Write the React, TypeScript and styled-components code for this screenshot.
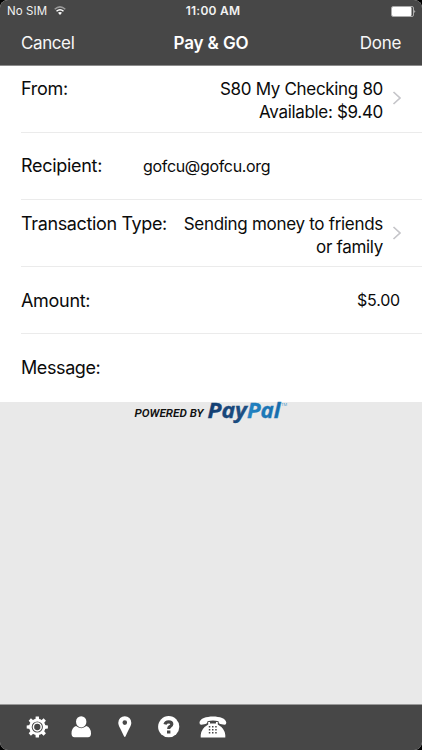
import React from 'react';
import styled, { createGlobalStyle } from 'styled-components';

const GlobalStyle = createGlobalStyle`
  * { box-sizing: border-box; }
  body { margin: 0; background: #000; font-family: Inter, "Liberation Sans", sans-serif; -webkit-font-smoothing: antialiased; }
`;

const Screen = styled.main`
  width: 422px;
  height: 750px;
  display: flex;
  flex-direction: column;
  overflow: hidden;
  border-radius: 8px;
  background: #e9e9e9;
  color: #0b0b0b;
`;

const Header = styled.header`
  height: 66px;
  flex: none;
  background: #474747;
  border-bottom: 1px solid #8c8c8c;
  color: #fff;
`;

const StatusBar = styled.div`
  height: 22px;
  display: grid;
  grid-template-columns: 1fr auto 1fr;
  align-items: center;
  padding: 0 6px 0 7px;
  color: #f2f2f2;
`;

const Carrier = styled.div`
  display: flex;
  align-items: center;
  gap: 7px;
  font-size: 11.5px;
  letter-spacing: 0.08px;
  line-height: 22px;
`;

const Clock = styled.div`
  font-size: 12px;
  font-weight: 600;
  letter-spacing: 0.25px;
  line-height: 22px;
  padding-left: 3px;
`;

const BatteryIcon = styled.svg`
  justify-self: end;
  display: block;
`;

const NavBar = styled.nav`
  height: 42px;
  display: grid;
  grid-template-columns: 1fr auto 1fr;
  align-items: center;
  padding: 0 21px;
`;

const NavButton = styled.button<{ $end?: boolean }>`
  justify-self: ${(p) => (p.$end ? 'end' : 'start')};
  padding: 0;
  border: 0;
  background: none;
  color: #f7f7f7;
  font: 400 17px/24px Inter, "Liberation Sans", sans-serif;
  letter-spacing: ${(p) => (p.$end ? '-0.3px' : '-0.4px')};
`;

const Title = styled.h1`
  margin: 0;
  font-size: 17px;
  font-weight: 600;
  line-height: 24px;
  letter-spacing: -0.1px;
`;

const Form = styled.section`
  height: 336px;
  flex: none;
  background: #fff;
`;

const Row = styled.div<{ $top: number }>`
  height: 67px;
  margin-left: 21px;
  padding: ${(p) => p.$top}px 21px 0 0;
  display: flex;
  align-items: flex-start;
  border-bottom: 1px solid #ebebeb;
  &:last-child { border-bottom: 0; }
`;

const Label = styled.div<{ $track?: number }>`
  flex: none;
  font-size: 18px;
  line-height: 22px;
  letter-spacing: ${(p) => p.$track ?? -0.3}px;
`;

const Value = styled.div<{ $track?: number }>`
  margin-left: auto;
  font-size: 17px;
  line-height: 22.5px;
  text-align: right;
  white-space: nowrap;
  letter-spacing: ${(p) => p.$track ?? -0.38}px;
`;

const Recipient = styled(Value)`
  margin-left: 41px;
  font-size: 16px;
  line-height: 22px;
`;

const Amount = styled(Value)`
  font-size: 16px;
  line-height: 21px;
  padding-right: 1px;
`;

const Chevron = styled.svg`
  flex: none;
  margin: 13px -1px 0 9px;
`;

const Body = styled.section`
  flex: 1;
  display: flex;
  justify-content: center;
  align-items: flex-start;
`;

const LogoSvg = styled.svg`
  overflow: visible;
`;

const TabBar = styled.footer`
  height: 46px;
  flex: none;
  display: flex;
  background: #474747;
  border-top: 1px solid #999;
  padding: 7px 0 0 22px;
  gap: 14px;
`;

const Tab = styled.button`
  width: 30px;
  height: 30px;
  padding: 0;
  border: 0;
  background: none;
  svg { display: block; }
`;

const Arrow = () => (
  <Chevron width="10" height="14" viewBox="0 0 10 14" fill="none" stroke="#c5c5c9" strokeWidth="1.7">
    <path d="M1.5 1 L8 7 L1.5 13" />
  </Chevron>
);

const teeth = [0, 45, 90, 135, 180, 225, 270, 315];

const Logo = () => (
  <LogoSvg width="160" height="26" viewBox="0 0 160 26" role="img">
    <defs>
      <linearGradient id="pay" x1="0" x2="1">
        <stop offset="0" stopColor="#123d70" />
        <stop offset="1" stopColor="#1f5287" />
      </linearGradient>
      <linearGradient id="pal" x1="0" x2="1">
        <stop offset="0" stopColor="#2386c6" />
        <stop offset="1" stopColor="#1669a8" />
      </linearGradient>
    </defs>
    <text x="3.5" y="14.5" fontFamily="Roboto, sans-serif" fontSize="11" fontStyle="italic" fontWeight="600" fill="#111" textLength="69" lengthAdjust="spacingAndGlyphs">POWERED BY</text>
    <g fontFamily="Open Sans, Noto Sans, sans-serif" fontSize="22" fontStyle="italic" fontWeight="700" strokeWidth=".35">
      <text x="76.5" y="15.5" fill="url(#pay)" stroke="#174678" textLength="39.5" lengthAdjust="spacingAndGlyphs">Pay</text>
      <text x="116" y="15.5" fill="url(#pal)" stroke="#1f7bb9" textLength="33.5" lengthAdjust="spacingAndGlyphs">Pal</text>
    </g>
    <text x="150" y="3.5" fontFamily="Inter, sans-serif" fontSize="4" fill="#4f9aca">TM</text>
  </LogoSvg>
);

export default function App() {
  return (
    <>
      <GlobalStyle />
      <Screen>
        <Header>
          <StatusBar>
            <Carrier>
              No SIM
              <svg width="12" height="10" viewBox="0 0 12 10" fill="none" strokeWidth="1.5">
                <path d="M.7 3.2 Q6 -1.5 11.3 3.2" stroke="#9a9a9a" />
                <path d="M2.5 5.2 Q6 2.2 9.5 5.2" stroke="#fff" />
                <path d="M4 6.8 Q6 5 8 6.8 L6 9Z" fill="#fff" />
              </svg>
            </Carrier>
            <Clock>11:00 AM</Clock>
            <BatteryIcon width="25" height="11" viewBox="0 0 25 11">
              <rect x=".5" y=".5" width="22" height="10" rx="1.5" fill="none" stroke="#aaa" />
              <rect x="1" y="1" width="19.5" height="9" rx="1" fill="#fff" />
              <path d="M23.5 4 Q25 5.5 23.5 7Z" fill="#fff" />
            </BatteryIcon>
          </StatusBar>
          <NavBar>
            <NavButton>Cancel</NavButton>
            <Title>Pay &amp; GO</Title>
            <NavButton $end>Done</NavButton>
          </NavBar>
        </Header>
        <Form>
          <Row $top={12}>
            <Label>From:</Label>
            <Value $track={-0.32}>S80 My Checking 80<br />Available: $9.40</Value>
            <Arrow />
          </Row>
          <Row $top={22}>
            <Label>Recipient:</Label>
            <Recipient $track={-0.33}>gofcu@gofcu.org</Recipient>
          </Row>
          <Row $top={13}>
            <Label $track={-0.36}>Transaction Type:</Label>
            <Value $track={-0.3}>Sending money to friends<br />or family</Value>
            <Arrow />
          </Row>
          <Row $top={23}>
            <Label>Amount:</Label>
            <Amount $track={-0.2}>$5.00</Amount>
          </Row>
          <Row $top={23}>
            <Label $track={-0.4}>Message:</Label>
          </Row>
        </Form>
        <Body><Logo /></Body>
        <TabBar>
          <Tab aria-label="Settings">
            <svg width="30" height="30" viewBox="0 0 30 30">
              <g transform="translate(15.3 15)" fill="#fff">
                {teeth.map((a) => <path key={a} d="M-1.9 -7 L-1.6 -10.6 H1.6 L1.9 -7Z" transform={`rotate(${a})`} />)}
                <circle r="6.9" fill="none" stroke="#fff" strokeWidth="2.6" />
                <circle r="3.9" fill="none" stroke="#fff" strokeWidth="1.5" />
              </g>
            </svg>
          </Tab>
          <Tab aria-label="Profile">
            <svg width="30" height="30" viewBox="0 0 30 30" fill="#fff">
              <ellipse cx="15.2" cy="9.8" rx="5.2" ry="5.6" />
              <path d="M10 14 Q15.2 18.3 20.4 14 Q25 15.5 25 21.5 Q25 25.2 22 25.2 H8.5 Q5.5 25.2 5.5 21.5 Q5.5 15.5 10 14Z" />
            </svg>
          </Tab>
          <Tab aria-label="Locations">
            <svg width="30" height="30" viewBox="0 0 30 30" fill="#fff">
              <path fillRule="evenodd" d="M14.8 4.2 A6.5 6.5 0 0 1 21.3 10.7 C21.3 13.5 19.7 15.4 15.6 24.3 Q14.8 25.5 14 24.3 C9.9 15.4 8.3 13.5 8.3 10.7 A6.5 6.5 0 0 1 14.8 4.2Z M14.8 8.3 A2.3 2.3 0 1 0 14.8 12.9 A2.3 2.3 0 1 0 14.8 8.3Z" />
            </svg>
          </Tab>
          <Tab aria-label="Help">
            <svg width="30" height="30" viewBox="0 0 30 30">
              <circle cx="14.7" cy="14.7" r="10.6" fill="#fff" />
              <path d="M11 12.4 Q11.6 9.8 14.7 9.8 Q17.8 9.8 17.8 12.2 Q17.8 13.7 15.8 14.7 Q14.7 15.4 14.7 17" fill="none" stroke="#474747" strokeWidth="3.2" />
              <rect x="13" y="18.5" width="3.4" height="3" fill="#474747" />
            </svg>
          </Tab>
          <Tab aria-label="Call">
            <svg width="30" height="30" viewBox="0 0 30 30" fill="#fff">
              <path d="M1.5 10.5 C2 2.4 28 2.4 28.3 10.5 Q28.5 12.7 26.4 12.7 L22.3 12 Q20.4 11.7 20.5 9.2 Q15 7.8 9.5 9.2 Q9.5 11.7 7.5 12 L3.4 12.7 Q1.3 12.7 1.5 10.5Z" />
              <path d="M10.2 10 H12 V11.5 H18 V10 H19.8 V12.5 Q26.8 16.5 27.3 23 V25.5 H2.7 V23 Q3.2 16.5 10.2 12.5Z" />
              <g fill="#474747">
                {[14, 17, 20].map((y) => [10.8, 14, 17.2].map((x) => <rect key={`${x}-${y}`} x={x} y={y} width="1.5" height="1.5" />))}
              </g>
            </svg>
          </Tab>
        </TabBar>
      </Screen>
    </>
  );
}
